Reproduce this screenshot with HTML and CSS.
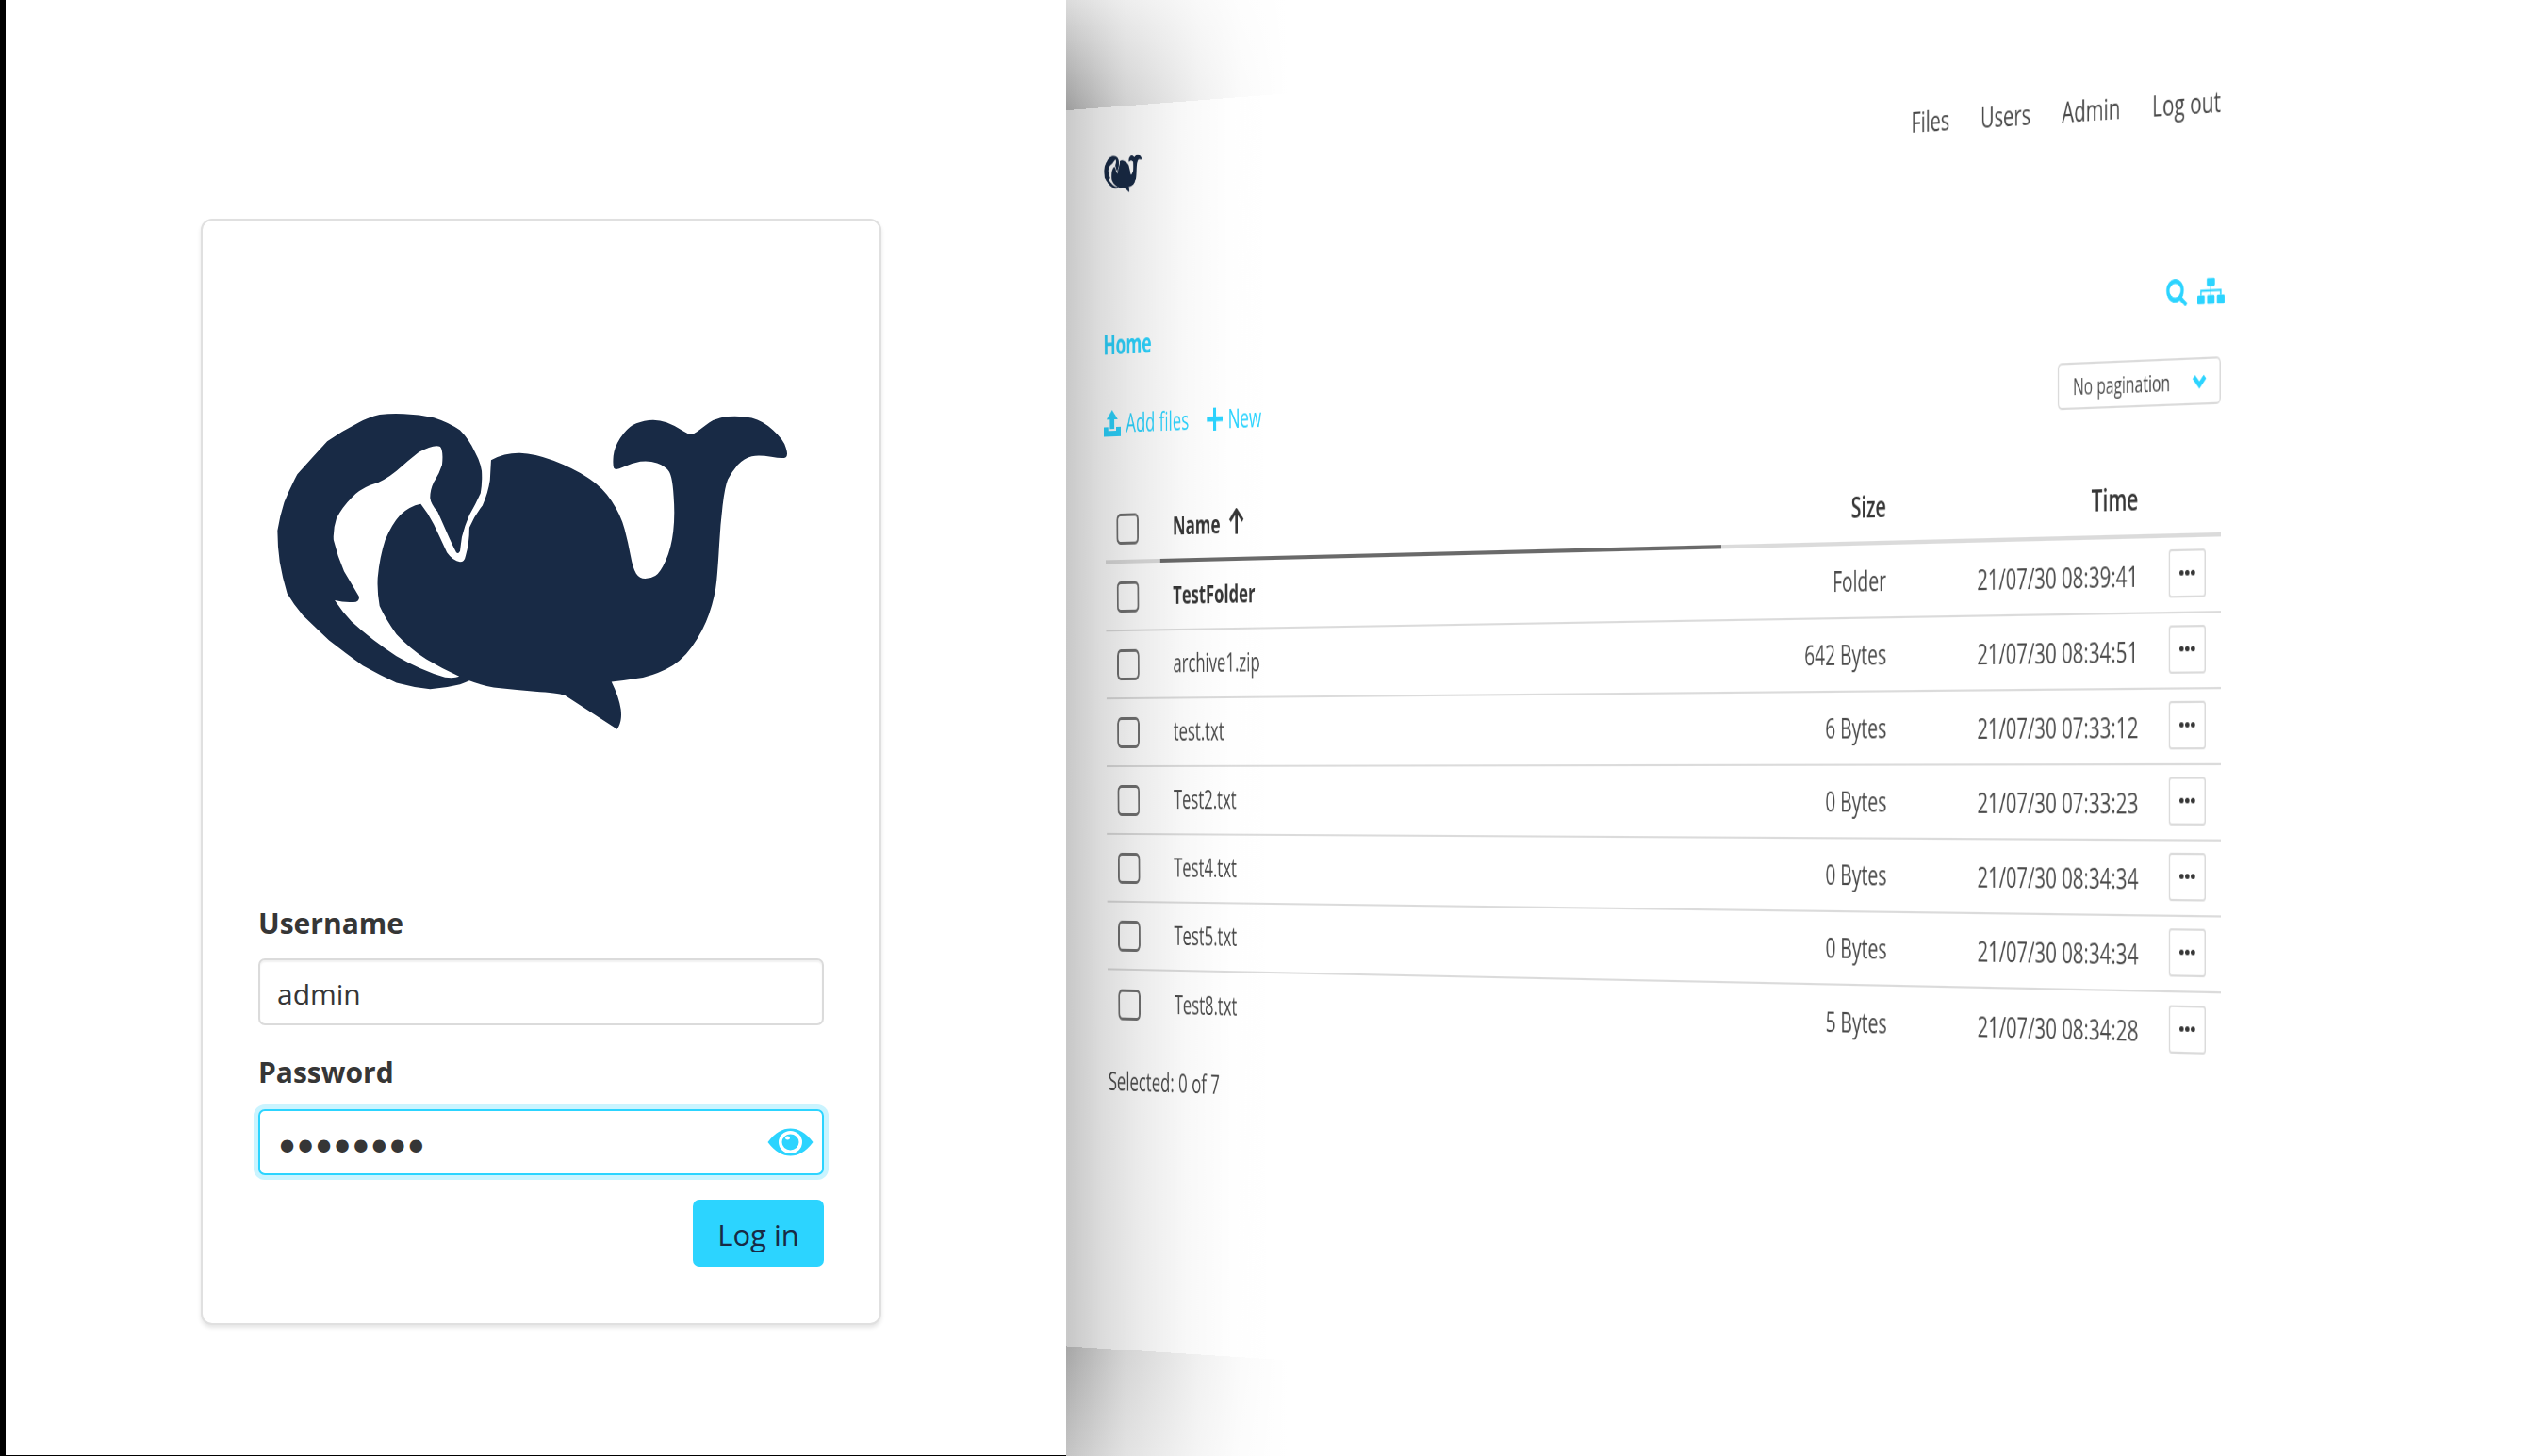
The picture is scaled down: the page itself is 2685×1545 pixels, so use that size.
FILE: index.html
```html
<!DOCTYPE html>
<html lang="en">
<head>
<meta charset="utf-8">
<title>Log in</title>
<link rel="stylesheet" href="styles.css">
</head>
<body>
<svg class="defs" width="0" height="0" aria-hidden="true">
  <symbol id="whale" viewBox="0 0 1568 1250" preserveAspectRatio="none">
    <path d="M683 265Q720 242 760 243Q800 245 850 267Q900 290 940 320Q980 350 1005 395Q1030 440 1040 485Q1050 530 1056 570Q1062 610 1071 627Q1080 643 1095 643Q1110 643 1122 634Q1135 625 1150 585Q1165 545 1170 492Q1175 440 1171 380Q1168 320 1159 302Q1150 285 1127 275Q1105 266 1082 270Q1060 275 1037 287Q1015 300 1011 290Q1008 280 1010 252Q1012 225 1028 195Q1045 165 1062 153Q1080 142 1105 138Q1130 135 1152 145Q1175 155 1196 172Q1217 190 1233 175Q1250 160 1267 145Q1285 130 1317 126Q1350 123 1380 131Q1410 140 1437 170Q1465 200 1471 225Q1478 250 1471 256Q1465 262 1432 255Q1400 248 1380 253Q1360 258 1342 281Q1325 305 1316 327Q1308 350 1302 410Q1296 470 1293 535Q1290 600 1286 650Q1282 700 1266 755Q1250 810 1220 860Q1190 910 1150 932Q1110 955 1075 961Q1040 968 1005 972Q1025 1020 1030 1060Q1034 1100 1020 1123L880 1015Q860 1008 800 1003Q745 997 690 990Q655 982 625 968Q612 975 600 980Q560 992 520 995Q475 990 430 975Q385 950 340 920Q295 882 250 840Q215 800 180 760Q155 725 138 690Q125 640 118 590Q112 540 112 490Q118 445 130 400Q145 355 165 310Q205 257 245 205Q285 172 330 145Q355 128 385 120Q418 116 450 118Q492 120 530 130Q570 145 600 170Q625 200 640 240Q655 272 658 300Q660 335 655 370Q642 405 625 440Q612 475 605 510Q602 535 600 555Q596 566 590 560Q580 537 570 510Q555 470 540 430Q522 405 520 385Q520 360 530 335Q545 307 552 280Q556 235 547 222Q530 213 490 240Q460 268 430 300Q395 335 360 345Q330 360 310 385Q285 415 270 450Q260 485 262 520Q272 570 290 620Q310 660 330 700Q332 718 315 718Q290 720 265 712Q285 748 310 780Q365 840 430 890Q495 935 560 958Q585 962 598 955Q555 932 510 900Q465 865 430 820Q400 770 385 730Q378 685 380 640Q385 575 400 520Q417 470 440 440Q465 412 495 405Q515 435 530 470Q548 515 565 560Q582 588 600 590Q612 590 615 570Q625 530 625 480Q640 440 660 410Q675 370 680 330Z"/>
  </symbol>
</svg>

<main class="spread">
  <section class="login-page">
    <form class="card">
      <svg class="card-logo" viewBox="60.7 0 1512 1250" preserveAspectRatio="none" aria-hidden="true"><use href="#whale" width="1568" height="1250"/></svg>
      <label class="field-label first">Username</label>
      <input class="field" type="text" value="admin">
      <label class="field-label">Password</label>
      <div class="password">
        <input class="field focused" type="password" value="12345678">
        <svg class="eye" viewBox="0 0 49 30" aria-hidden="true">
          <path class="eye-fill" d="M.5 15C8 5 16 .5 24.500 .5S41 5 48.500 15C41 25 33 29.500 24.500 29.500S8 25 .5 15Z"/>
          <ellipse class="eye-hole" cx="24.500" cy="15" rx="12.500" ry="12"/>
          <ellipse class="eye-fill" cx="24.500" cy="15" rx="9" ry="8.500"/>
          <ellipse class="eye-hole" cx="21.500" cy="10.500" rx="2.500" ry="2"/>
        </svg>
      </div>
      <div class="form-actions"><button class="login-btn" type="button">Log in</button></div>
    </form>
  </section>

  <section class="flip">
    <div class="sheet">
      <header class="topbar">
        <svg class="mini-logo" viewBox="100 110 1390 1025" preserveAspectRatio="none" aria-hidden="true"><use href="#whale" width="1568" height="1250"/></svg>
        <nav class="nav"><a>Files</a><a>Users</a><a>Admin</a><a>Log out</a></nav>
      </header>

      <div class="crumbs">
        <a class="home">Home</a>
        <div class="tools">
          <svg class="ico-search" viewBox="0 0 32 26" aria-hidden="true"><ellipse cx="13" cy="11" rx="10" ry="8.800"/><path d="M20 18l9 7"/></svg>
          <svg class="ico-tree" viewBox="0 0 40 26" aria-hidden="true"><rect x="14" y="0" width="12" height="8" rx="1.500"/><rect x="0" y="17" width="11" height="9" rx="1.500"/><rect x="14.500" y="17" width="11" height="9" rx="1.500"/><rect x="29" y="17" width="11" height="9" rx="1.500"/><path class="tree-line" d="M20 8v9M5.500 17v-4.500h29V17"/></svg>
        </div>
      </div>

      <div class="actions">
        <a class="action">
          <svg class="ico-upload" viewBox="0 0 30 28" aria-hidden="true"><path d="M15 0l10 10h-6v10h-8V10H5z"/><path d="M0 18h8v4h14v-4h8v10H0z"/></svg>Add files</a>
        <a class="action">
          <svg class="ico-plus" viewBox="0 0 27 24" aria-hidden="true"><path d="M11 0h5v9.500h11v5H16V24h-5V14.500H0v-5h11z"/></svg>New</a>
        <div class="select">
          <span>No pagination</span>
          <svg class="ico-chevron" viewBox="0 0 18 12" aria-hidden="true"><path d="M2 2l7 7 7-7"/></svg>
        </div>
      </div>

      <div class="table">
        <div class="row head">
          <div class="cell-check"><span class="check"></span></div>
          <div class="cell-name sorted">Name
            <svg class="ico-arrow" viewBox="0 0 30 28" aria-hidden="true"><path d="M15 27V3M4 13L15 2l11 11"/></svg>
          </div>
          <div class="cell-size">Size</div>
          <div class="cell-time">Time</div>
          <div class="cell-more"></div>
        </div>
        <div class="row">
          <div class="cell-check"><span class="check"></span></div>
          <div class="cell-name folder">TestFolder</div>
          <div class="cell-size">Folder</div>
          <div class="cell-time">21/07/30 08:39:41</div>
          <div class="cell-more"><button class="more" type="button"><i></i><i></i><i></i></button></div>
        </div>
        <div class="row">
          <div class="cell-check"><span class="check"></span></div>
          <div class="cell-name">archive1.zip</div>
          <div class="cell-size">642 Bytes</div>
          <div class="cell-time">21/07/30 08:34:51</div>
          <div class="cell-more"><button class="more" type="button"><i></i><i></i><i></i></button></div>
        </div>
        <div class="row">
          <div class="cell-check"><span class="check"></span></div>
          <div class="cell-name">test.txt</div>
          <div class="cell-size">6 Bytes</div>
          <div class="cell-time">21/07/30 07:33:12</div>
          <div class="cell-more"><button class="more" type="button"><i></i><i></i><i></i></button></div>
        </div>
        <div class="row">
          <div class="cell-check"><span class="check"></span></div>
          <div class="cell-name">Test2.txt</div>
          <div class="cell-size">0 Bytes</div>
          <div class="cell-time">21/07/30 07:33:23</div>
          <div class="cell-more"><button class="more" type="button"><i></i><i></i><i></i></button></div>
        </div>
        <div class="row">
          <div class="cell-check"><span class="check"></span></div>
          <div class="cell-name">Test4.txt</div>
          <div class="cell-size">0 Bytes</div>
          <div class="cell-time">21/07/30 08:34:34</div>
          <div class="cell-more"><button class="more" type="button"><i></i><i></i><i></i></button></div>
        </div>
        <div class="row">
          <div class="cell-check"><span class="check"></span></div>
          <div class="cell-name">Test5.txt</div>
          <div class="cell-size">0 Bytes</div>
          <div class="cell-time">21/07/30 08:34:34</div>
          <div class="cell-more"><button class="more" type="button"><i></i><i></i><i></i></button></div>
        </div>
        <div class="row last">
          <div class="cell-check"><span class="check"></span></div>
          <div class="cell-name">Test8.txt</div>
          <div class="cell-size">5 Bytes</div>
          <div class="cell-time">21/07/30 08:34:28</div>
          <div class="cell-more"><button class="more" type="button"><i></i><i></i><i></i></button></div>
        </div>
      </div>
      <p class="selected">Selected: 0 of 7</p>
    </div>
  </section>
</main>
</body>
</html>
```
FILE: styles.css
```css
* { box-sizing: border-box; }
html, body { margin: 0; height: 100%; background: #fff; overflow: hidden; }
body { font-family: "Open Sans", "Noto Sans", sans-serif; color: #363636; }
.defs { position: absolute; }

.spread { display: flex; width: 2685px; height: 1545px; }

/* left page */
.login-page {
  flex: 0 0 1131px;
  height: 1545px;
  background: #fff;
  border-left: 6px solid #000;
  border-bottom: 1px solid #000;
  padding: 232px 0 0 207px;
}
.card {
  width: 722px;
  height: 1174px;
  border: 2px solid #e0e0e0;
  border-radius: 12px;
  box-shadow: 0 3px 4px rgba(0, 0, 0, .1);
  padding: 166px 59px 0;
  background: #fff;
}
.card-logo { display: block; width: 600px; height: 416px; fill: #182a45; }
.field-label { display: block; font-size: 30px; font-weight: 700; line-height: 40px; margin-top: 30px; margin-bottom: 19px; color: #363636; }
.field-label.first { margin-top: 144px; margin-bottom: 17px; }
.field {
  display: block;
  width: 600px;
  height: 71px;
  border: 2px solid #dbdbdb;
  border-radius: 7px;
  padding: 3px 18px 0;
  font: 400 30px "Open Sans", sans-serif;
  color: #363636;
  background: #fff;
  box-shadow: inset 0 2px 2px rgba(10, 10, 10, .06);
  outline: 0;
}
.password { position: relative; }
.field.focused {
  height: 70px;
  border: 2px solid #2cd4ff;
  box-shadow: 0 0 0 5px rgba(44, 212, 255, .25);
  font-family: "DejaVu Sans", sans-serif;
  font-size: 46px;
  letter-spacing: -7.6px;
  padding: 11px 0 0 15px;
}
.eye { position: absolute; right: 11px; top: 20px; width: 49px; height: 30px; }
.eye-fill { fill: #2cd4ff; }
.eye-hole { fill: #fff; }
.form-actions { display: flex; justify-content: flex-end; margin-top: 26px; }
.login-btn {
  width: 139px;
  height: 71px;
  border: 0;
  border-radius: 7px;
  background: #2cd4ff;
  color: #182a45;
  font: 400 31px "Open Sans", sans-serif;
  padding: 2px 0 0;
}

/* right page, bent away from the reader */
.flip {
  flex: 1 1 0;
  height: 1545px;
  overflow: hidden;
  padding-top: 114px;
  background-color: #fff;
  background-image:
    linear-gradient(to right, rgba(255,255,255,0) 0, rgba(255,255,255,.5) 62px, rgba(255,255,255,.83) 140px, rgba(255,255,255,.95) 185px, #fff 235px),
    linear-gradient(to top, #999, #dcdcdc),
    linear-gradient(to right, rgba(255,255,255,0) 0, rgba(255,255,255,.5) 62px, rgba(255,255,255,.83) 140px, rgba(255,255,255,.95) 185px, #fff 235px),
    linear-gradient(to bottom, #a5a5a5, #c6c6c6);
  background-size: 100% 125px;
  background-position: 0 0, 0 0, 0 1425px, 0 1425px;
  background-repeat: no-repeat;
}
.sheet {
  position: relative;
  width: 2242px;
  height: 1320px;
  background: #fff;
  padding: 52px 423px 0 69px;
  font-size: 28px;
  line-height: 40px;
  color: #4a4a4a;
  transform-origin: 0 716px;
  transform: matrix3d(.5958, 0, 0, -.00006338, .004, .993, 0, .0000033, 0, 0, 1, 0, 0, 0, 0, 1);
}
/* fills the sliver the slight skew would leave along the fold */
.sheet::before {
  content: "";
  position: absolute;
  top: 0;
  bottom: 0;
  left: -14px;
  width: 14px;
  background: #c9c9c9;
}
.sheet::after {
  content: "";
  position: absolute;
  inset: 0;
  pointer-events: none;
  background: linear-gradient(to right, rgba(0,0,0,.215) 0, rgba(0,0,0,.137) 62px, rgba(0,0,0,.08) 127px, rgba(0,0,0,.027) 210px, rgba(0,0,0,.005) 290px, rgba(0,0,0,0) 400px);
}

.topbar { display: flex; justify-content: space-between; align-items: center; height: 40px; }
.mini-logo { display: block; width: 67px; height: 40px; margin-left: 2px; fill: #182a45; }
.nav { display: flex; gap: 45px; margin-top: 3px; font-size: 27.500px; }

.crumbs { display: flex; justify-content: space-between; align-items: center; height: 40px; margin-top: 140px; }
.home { color: #2cd4ff; font-weight: 700; font-size: 28.500px; margin: 0 0 3px; }
.tools { display: flex; gap: 12px; margin-right: -5px; }
.ico-search { width: 32px; height: 26px; fill: none; stroke: #2cd4ff; stroke-width: 4.500; }
.ico-tree { width: 38px; height: 26px; fill: #2cd4ff; }
.tree-line { fill: none; stroke: #2cd4ff; stroke-width: 2; }

.actions { display: flex; align-items: center; height: 45px; margin-top: 42px; color: #2cd4ff; }
.action { display: flex; align-items: center; margin: 0 31px 4px 0; font-size: 27.500px; }
.ico-upload { width: 30px; height: 28px; margin: 0 9px 0 0; fill: #2cd4ff; }
.ico-plus { width: 27px; height: 24px; margin-right: 9px; fill: #2cd4ff; }
.select {
  display: flex;
  align-items: center;
  justify-content: space-between;
  width: 231px;
  height: 45px;
  margin-left: auto;
  padding: 0 18px 0 20px;
  border: 2px solid #dbdbdb;
  border-radius: 6px;
  background: #fff;
  font-size: 21px;
  color: #4a4a4a;
}
.ico-chevron { width: 20px; height: 14px; fill: none; stroke: #2cd4ff; stroke-width: 4.500; }

.table { margin: 50px 0 0 3px; width: 1747px; }
.row {
  display: grid;
  grid-template-columns: 95px 920px 263px 365px 104px;
  height: 72px;
  align-items: stretch;
  border-bottom: 2px solid #dbdbdb;
}
.row.last { border-bottom: 0; }
.row.head { height: 75px; border-bottom: 4px solid #dbdbdb; padding-top: 3px; font-weight: 600; color: #363636; }
.row > div { display: flex; align-items: center; }
.cell-check { padding-left: 19px; }
.row.head .cell-check { padding-top: 2px; }
.check { display: block; width: 39px; height: 33px; border: 3.500px solid #707070; border-radius: 7px; }
.cell-name { padding: 0 0 3px 22px; font-size: 27px; }
.row.head .cell-name { font-weight: 700; font-size: 27.500px; padding-bottom: 3px; }
.cell-name.folder { font-weight: 700; color: #363636; }
.row.head .cell-name.sorted { position: relative; }
.cell-name.sorted::after { content: ""; position: absolute; left: 0; right: 0; bottom: -4px; height: 4px; background: #6a6a6a; }
.ico-arrow { width: 30px; height: 28px; margin: -3px 0 0 13px; fill: none; stroke: #363636; stroke-width: 4; }
.cell-size { justify-content: flex-end; padding-right: 13px; font-size: 27.300px; }
.row.head .cell-size, .row.head .cell-time { font-size: 28px; }
.cell-time { justify-content: flex-end; padding-right: 12px; font-size: 27.700px; }
.cell-more { padding-left: 31px; }
.more {
  display: flex;
  align-items: center;
  justify-content: center;
  gap: 2px;
  width: 52px;
  height: 46px;
  margin-bottom: 3px;
  padding: 0;
  border: 2px solid #dbdbdb;
  border-radius: 4px;
  background: #fff;
}
.more i { display: block; width: 6px; height: 5.500px; border-radius: 50%; background: #363636; }
.selected { margin: 26px 0 0 4px; font-size: 27.500px; color: #4a4a4a; }
```
